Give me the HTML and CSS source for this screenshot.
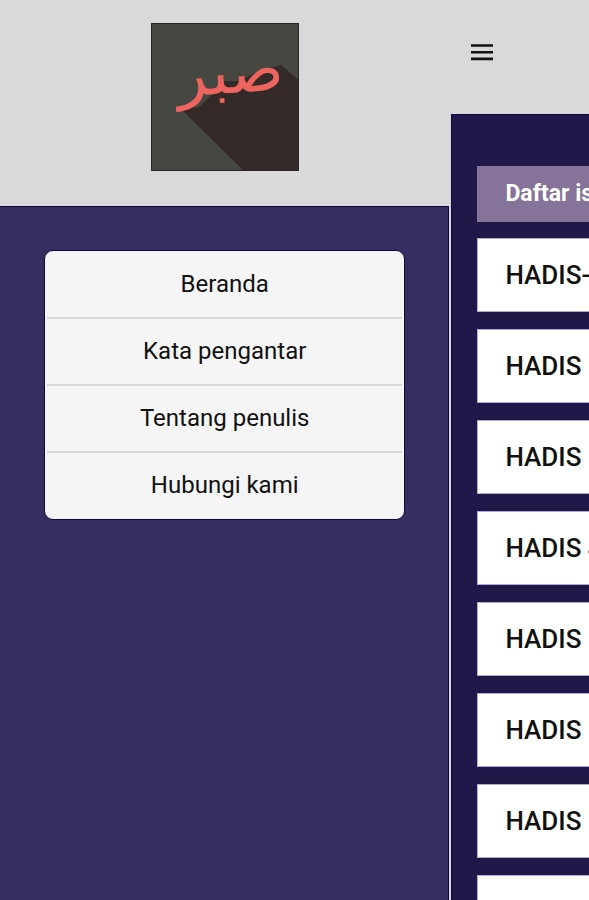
FILE: index.html
```html
<!DOCTYPE html>
<html lang="id">
  <head>
    <meta charset="UTF-8" />
    <meta name="viewport" content="width=device-width, initial-scale=1.0" />
    <title>Hadis Sabar</title>
    <link rel="stylesheet" href="styles.css">
  </head>
  <body>
    <div class="app">
      <aside class="drawer">
        <div class="drawer-header">
          <svg class="logo" viewBox="0 0 148 148" role="img" aria-label="صبر">
            <rect width="148" height="148" fill="#464741" />
            <!-- long shadow -->
            <path d="M30 86 L48 84 L60 72 L74 58 L88 58 L104 50 L130 42 L148 57 V148 H93 Z" fill="#342a28" />
            <text class="logo-text" x="80" y="70" text-anchor="middle" transform="rotate(-4 80 67)">صبر</text>
            <rect x="0.5" y="0.5" width="147" height="147" fill="none" stroke="#252525" />
          </svg>
        </div>
        <nav class="drawer-body">
          <ul class="menu">
            <li><a href="#beranda">Beranda</a></li>
            <li><a href="#pengantar">Kata pengantar</a></li>
            <li><a href="#penulis">Tentang penulis</a></li>
            <li><a href="#kontak">Hubungi kami</a></li>
          </ul>
        </nav>
      </aside>
      <main class="page">
        <header class="topbar">
          <button class="menu-button" type="button" aria-label="Menu">
            <svg viewBox="0 0 24 18" width="24" height="18">
              <path d="M1 2.5h22M1 9.2h22M1 15.9h22" stroke="#111" stroke-width="2.6" />
            </svg>
          </button>
        </header>
        <div class="content">
          <h1 class="title">Daftar isi</h1>
          <ul class="list">
            <li><a href="#hadis-1">HADIS-</a></li>
            <li><a href="#hadis-2">HADIS</a></li>
            <li><a href="#hadis-3">HADIS</a></li>
            <li><a href="#hadis-4">HADIS 4</a></li>
            <li><a href="#hadis-5">HADIS</a></li>
            <li><a href="#hadis-6">HADIS</a></li>
            <li><a href="#hadis-7">HADIS</a></li>
            <li><a href="#hadis-8">HADIS</a></li>
          </ul>
        </div>
      </main>
    </div>
  </body>
</html>
```
FILE: styles.css
```css
* {
  box-sizing: border-box;
}
body {
  margin: 0;
  font-family: Roboto, "Liberation Sans", sans-serif;
  background-color: #d9d9d9;
}
ul {
  list-style: none;
  margin: 0;
  padding: 0;
}
a {
  color: #111;
  text-decoration: none;
}
.app {
  display: grid;
  grid-template-columns: 13fr 4fr;
  height: 100vh;
  overflow: hidden;
}
.drawer {
  display: flex;
  flex-direction: column;
  margin-right: 1px;
}
.drawer-header {
  display: flex;
  justify-content: center;
  padding: 23px 0 35px;
}
.logo {
  display: block;
  width: 148px;
  height: 148px;
}
.logo-text {
  font-family: "DejaVu Sans", sans-serif;
  font-size: 63px;
  fill: #ee6560;
}
.drawer-body {
  flex: 1;
  padding: 43px 43px 0 44px;
  background-color: #362e60;
  border: 1px solid #0e0749;
  border-width: 1px 1px 0 0;
}
.menu {
  padding: 1px 2px;
  background-color: #f5f5f5;
  border: 1px solid #0e0749;
  border-radius: 9px;
}
.menu li + li {
  border-top: 2px solid #d8d8d8;
}
.menu a {
  display: block;
  line-height: 65px;
  font-size: 24px;
  text-align: center;
}
.page {
  display: flex;
  flex-direction: column;
  min-width: 0;
  min-height: 0;
  margin-left: 1px;
  overflow: hidden;
}
.topbar {
  flex: none;
  height: 114px;
  padding: 43px 19px;
}
.menu-button {
  display: block;
  padding: 0;
  border: none;
  background: none;
  cursor: pointer;
}
.menu-button svg {
  display: block;
}
.content {
  flex: 1;
  min-height: 0;
  padding: 51px 0 0 25px;
  background-color: #1f1849;
  border: 1px solid #0e0749;
  border-width: 1px 0 0 1px;
  overflow: hidden;
  white-space: nowrap;
}
.title {
  margin: 0 0 16px;
  padding-left: 28px;
  background-color: #857399;
  color: #fff;
  font-size: 23px;
  font-weight: 700;
  line-height: 56px;
}
.list li {
  margin-bottom: 17px;
  padding-left: 27px;
  background-color: #fff;
  border: 1px solid #b5a8d8;
  border-right: none;
}
.list a {
  font-size: 26px;
  font-weight: 500;
  line-height: 72px;
}
```
